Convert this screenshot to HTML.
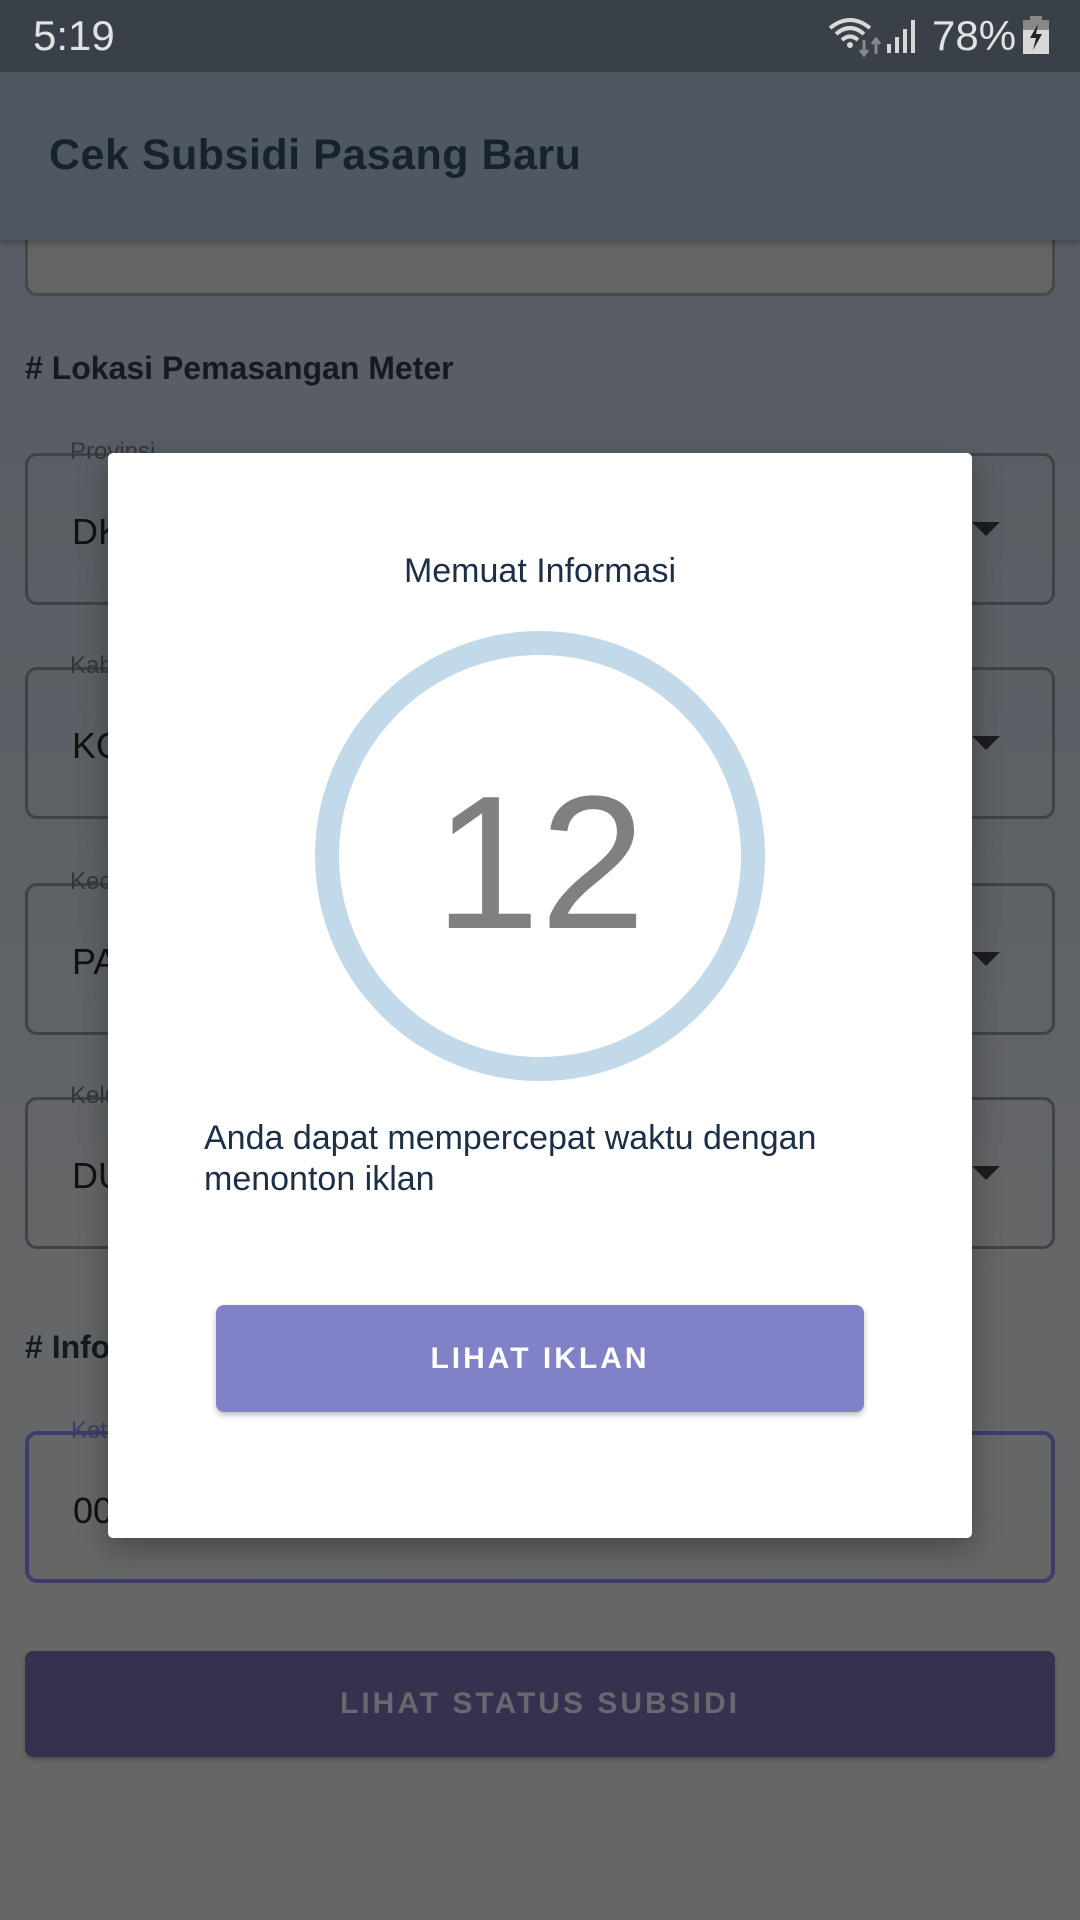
<!DOCTYPE html>
<html><head><meta charset="utf-8"><style>
*{margin:0;padding:0;box-sizing:border-box}
body{width:1080px;height:1920px;position:relative;overflow:hidden;font-family:"Liberation Sans",sans-serif;background:linear-gradient(#575d63 240px,#5c6166 800px,#656667 1300px,#666 1920px)}
.abs{position:absolute}
.field{position:absolute;left:25px;width:1030px;height:152px;border:3px solid #3f4247;border-radius:12px}
.lbl{position:absolute;left:34px;top:-18px;padding:0 8px;font-size:24px;color:#33373c;background:transparent}
.val{position:absolute;left:44px;top:55px;font-size:36px;color:#111}
.arr{position:absolute;right:52px;top:66px;width:0;height:0;border-left:14px solid transparent;border-right:14px solid transparent;border-top:14px solid #1c1c1c}
.h{position:absolute;left:25px;font-size:32px;font-weight:bold;color:#141a22}
</style></head><body>
<div class="abs" style="left:25px;top:200px;width:1030px;height:96px;border:3px solid #45484c;border-top:none;border-radius:0 0 12px 12px;background:#646464"></div>
<div class="abs" style="left:0;top:0;width:1080px;height:72px;background:#3a4048"></div>
<div class="abs" style="left:33px;top:12px;font-size:42px;color:#e0e2e4">5:19</div>
<svg class="abs" style="left:826px;top:14px" width="60" height="44" viewBox="0 0 60 44">
<path d="M4 14 Q24 -2 44 14" stroke="#d8d8d8" stroke-width="4" fill="none"/>
<path d="M10 20 Q24 8 38 20" stroke="#d8d8d8" stroke-width="4" fill="none"/>
<path d="M16 26 Q24 19 32 26" stroke="#d8d8d8" stroke-width="4" fill="none"/>
<circle cx="24" cy="31" r="3" fill="#d8d8d8"/>
<path d="M38 26v14M34 36l4 5 4-5" stroke="#888" stroke-width="3" fill="none"/>
<path d="M50 40v-14M46 30l4-5 4 5" stroke="#888" stroke-width="3" fill="none"/>
</svg>
<svg class="abs" style="left:885px;top:18px" width="32" height="36"><rect x="2" y="26" width="4" height="9" fill="#d8d8d8"/><rect x="10" y="19" width="4" height="16" fill="#d8d8d8"/><rect x="18" y="11" width="4" height="24" fill="#d8d8d8"/><rect x="26" y="2" width="4" height="33" fill="#d8d8d8"/></svg>
<div class="abs" style="left:932px;top:12px;font-size:42px;color:#e0e2e4">78%</div>
<svg class="abs" style="left:1023px;top:16px" width="26" height="38"><rect x="7" y="0" width="12" height="4" fill="#888"/><rect x="0" y="4" width="26" height="10" fill="#888"/><rect x="0" y="14" width="26" height="24" fill="#d8d8d8"/><path d="M15 8 L7 22 H13 L10 34 L19 18 H13 Z" fill="#222"/></svg>
<div class="abs" style="left:0;top:72px;width:1080px;height:168px;background:#4f5760;box-shadow:0 3px 6px rgba(0,0,0,.25)"></div>
<div class="abs" style="left:49px;top:131px;font-size:43px;font-weight:bold;color:#18222e;letter-spacing:.5px">Cek Subsidi Pasang Baru</div>
<div class="h" style="top:350px"># Lokasi Pemasangan Meter</div>
<div class="field" style="top:453px"><div class="lbl">Provinsi</div><div class="val">DKI</div><div class="arr"></div></div>
<div class="field" style="top:667px"><div class="lbl">Kabupaten</div><div class="val">KOTA</div><div class="arr"></div></div>
<div class="field" style="top:883px"><div class="lbl">Kecamatan</div><div class="val">PA</div><div class="arr"></div></div>
<div class="field" style="top:1097px"><div class="lbl">Kelurahan</div><div class="val">DU</div><div class="arr"></div></div>
<div class="h" style="top:1329px"># Informasi</div>
<div class="field" style="top:1431px;border:4px solid #3f3d6b"><div class="lbl" style="color:#3f3d6b">Ket</div><div class="val">00</div></div>
<div class="abs" style="left:25px;top:1651px;width:1030px;height:106px;background:#34324f;border-radius:8px;box-shadow:0 3px 5px rgba(0,0,0,.2);text-align:center;line-height:106px;font-size:30px;color:#68686e;letter-spacing:3px;font-weight:bold">LIHAT STATUS SUBSIDI</div>

<div class="abs" style="left:108px;top:453px;width:864px;height:1085px;background:#fff;border-radius:5px;box-shadow:0 10px 30px rgba(0,0,0,.3)">
<div class="abs" style="left:0;width:864px;top:99px;text-align:center;font-size:34px;color:#1c2f46">Memuat Informasi</div>
<div class="abs" style="left:207px;top:178px;width:450px;height:450px;border-radius:50%;border:24px solid #c2d9ea"></div>
<div class="abs" style="left:0;width:864px;top:315px;text-align:center;font-size:190px;line-height:190px;color:#808080">12</div>
<div class="abs" style="left:96px;top:665px;width:700px;font-size:34px;line-height:41px;color:#1c2f46">Anda dapat mempercepat waktu dengan menonton iklan</div>
<div class="abs" style="left:108px;top:852px;width:648px;height:107px;background:#8181c8;border-radius:8px;box-shadow:0 3px 6px rgba(0,0,0,.25);text-align:center;line-height:107px;font-size:30px;color:#fff;letter-spacing:3px;font-weight:bold">LIHAT IKLAN</div>
</div>
</body></html>
